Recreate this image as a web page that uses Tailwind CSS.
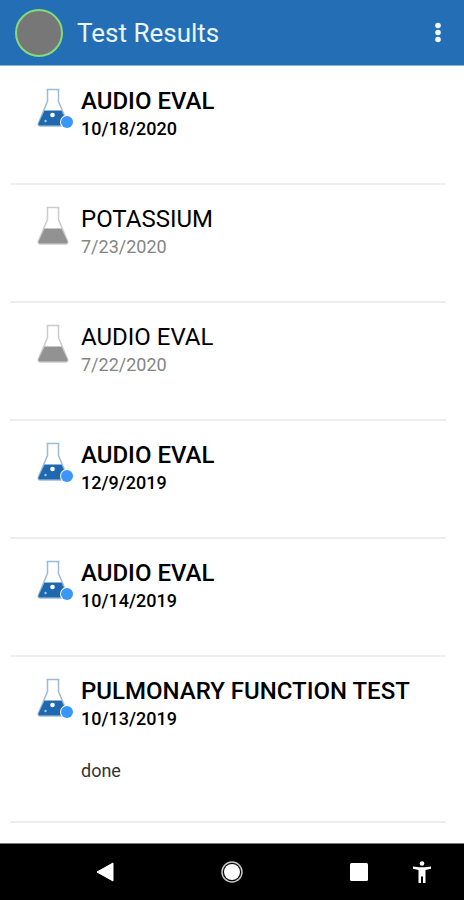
<!DOCTYPE html>
<html lang="en">
<head>
  <meta charset="UTF-8" />
  <meta name="viewport" content="width=device-width, initial-scale=1.0" />
  <title>Test Results</title>
  <script src="https://cdn.jsdelivr.net/npm/@tailwindcss/browser@4"></script>
  <style>
    body {
      font-family: Roboto, 'Liberation Sans', sans-serif;
    }
  </style>
</head>
<body class="bg-white text-black">
  <!-- Shared icons -->
  <svg class="hidden">
    <symbol id="flask-new" viewBox="0 0 40 42">
      <path d="M10.500 2.500h13M11.500 3v11.500L2.500 36q-1 3 2 3h25q3 0 2-3L22.500 14.500V3" fill="#fff" stroke="#9dbad8" stroke-width="1.500" stroke-linejoin="round" />
      <path d="M8.500 23.500h17l6 13q.5 2-1.500 2h-26q-2 0-1.500-2z" fill="#1f68b0" />
      <circle cx="16.500" cy="28" r="2.300" fill="#fff" />
      <circle cx="9.500" cy="34" r="1.200" fill="#a9c8e6" />
      <circle cx="31" cy="35" r="7" fill="#fff" />
      <circle cx="31" cy="35" r="6" fill="#3b96fa" />
    </symbol>
    <symbol id="flask-read" viewBox="0 0 40 42">
      <path d="M10.500 2.500h13M11.500 3v11.500L2.500 36q-1 3 2 3h25q3 0 2-3L22.500 14.500V3" fill="#fff" stroke="#cccccc" stroke-width="1.500" stroke-linejoin="round" />
      <path d="M8.500 23.500h17l6 13q.5 2-1.500 2h-26q-2 0-1.500-2z" fill="#929292" />
    </symbol>
  </svg>

  <div class="min-h-screen flex flex-col">
    <!-- Header -->
    <header class="flex items-center h-[66px] pl-[15px] pr-3.5 bg-[#246eb5] border-b border-[#8fb4da]">
      <div class="w-12 h-12 rounded-full bg-[#777777] border-2 border-[#84dc78]"></div>
      <h1 class="ml-3.5 text-[26px] leading-8 text-[#eaf5ff]">Test Results</h1>
      <button class="ml-auto w-6 h-8 flex items-center justify-center" aria-label="More options">
        <svg class="w-6 h-6" viewBox="0 0 24 24" fill="#f0f8ff">
          <circle cx="12" cy="4.500" r="2.800" />
          <circle cx="12" cy="11.500" r="2.800" />
          <circle cx="12" cy="18.500" r="2.800" />
        </svg>
      </button>
    </header>

    <!-- Results -->
    <main class="grow pt-px pl-2.5 pr-[18px]">
      <ul>
        <li class="border-b-2 border-[#eeeeee]">
          <a href="#" class="flex min-h-[116px] pt-5 pb-9 pl-[26px]">
            <svg class="w-10 h-[42px] shrink-0"><use href="#flask-new" /></svg>
            <div class="ml-[5px]">
              <h2 class="text-2xl leading-7 font-medium">AUDIO EVAL</h2>
              <p class="text-lg leading-7 font-medium">10/18/2020</p>
            </div>
          </a>
        </li>
        <li class="border-b-2 border-[#eeeeee]">
          <a href="#" class="flex min-h-[116px] pt-5 pb-9 pl-[26px]">
            <svg class="w-10 h-[42px] shrink-0"><use href="#flask-read" /></svg>
            <div class="ml-[5px]">
              <h2 class="text-2xl leading-7">POTASSIUM</h2>
              <p class="text-lg leading-7 text-[#858585]">7/23/2020</p>
            </div>
          </a>
        </li>
        <li class="border-b-2 border-[#eeeeee]">
          <a href="#" class="flex min-h-[116px] pt-5 pb-9 pl-[26px]">
            <svg class="w-10 h-[42px] shrink-0"><use href="#flask-read" /></svg>
            <div class="ml-[5px]">
              <h2 class="text-2xl leading-7">AUDIO EVAL</h2>
              <p class="text-lg leading-7 text-[#858585]">7/22/2020</p>
            </div>
          </a>
        </li>
        <li class="border-b-2 border-[#eeeeee]">
          <a href="#" class="flex min-h-[116px] pt-5 pb-9 pl-[26px]">
            <svg class="w-10 h-[42px] shrink-0"><use href="#flask-new" /></svg>
            <div class="ml-[5px]">
              <h2 class="text-2xl leading-7 font-medium">AUDIO EVAL</h2>
              <p class="text-lg leading-7 font-medium">12/9/2019</p>
            </div>
          </a>
        </li>
        <li class="border-b-2 border-[#eeeeee]">
          <a href="#" class="flex min-h-[116px] pt-5 pb-9 pl-[26px]">
            <svg class="w-10 h-[42px] shrink-0"><use href="#flask-new" /></svg>
            <div class="ml-[5px]">
              <h2 class="text-2xl leading-7 font-medium">AUDIO EVAL</h2>
              <p class="text-lg leading-7 font-medium">10/14/2019</p>
            </div>
          </a>
        </li>
        <li class="border-b-2 border-[#eeeeee]">
          <a href="#" class="flex pt-5 pb-9 pl-[26px]">
            <svg class="w-10 h-[42px] shrink-0"><use href="#flask-new" /></svg>
            <div class="ml-[5px]">
              <h2 class="text-2xl leading-7 font-medium">PULMONARY FUNCTION TEST</h2>
              <p class="text-lg leading-7 font-medium">10/13/2019</p>
              <p class="mt-6 text-lg leading-7 text-[#333333]">done</p>
            </div>
          </a>
        </li>
      </ul>
    </main>

    <!-- System navigation -->
    <nav class="flex items-center justify-end h-[57px] pr-8 bg-black border-t border-[#777777]">
      <button aria-label="Back">
        <svg class="w-5 h-5" viewBox="0 0 20 20" fill="#fff"><path d="M3 10L19 1v18z" stroke="#fff" stroke-linejoin="round" /></svg>
      </button>
      <button class="ml-[106px]" aria-label="Home">
        <svg class="w-6 h-6" viewBox="0 0 24 24">
          <circle cx="12" cy="12" r="10" fill="none" stroke="#c8c8c8" stroke-width="1.500" />
          <circle cx="12" cy="12" r="8" fill="#fff" />
        </svg>
      </button>
      <button class="ml-[105px]" aria-label="Recent apps">
        <svg class="w-5 h-5" viewBox="0 0 20 20"><rect x="1" y="1" width="18" height="18" rx="1.500" fill="#fff" /></svg>
      </button>
      <button class="ml-[43px]" aria-label="Accessibility">
        <svg class="w-5 h-6" viewBox="0 0 20 24" fill="#fff">
          <circle cx="10" cy="3.500" r="2.300" />
          <path d="M1 6.500l6 .8h6l6-.8v2.200l-5.500 1.300v13h-2.500v-6.500H9V23H6.500V10L1 8.700z" />
        </svg>
      </button>
    </nav>
  </div>
</body>
</html>
